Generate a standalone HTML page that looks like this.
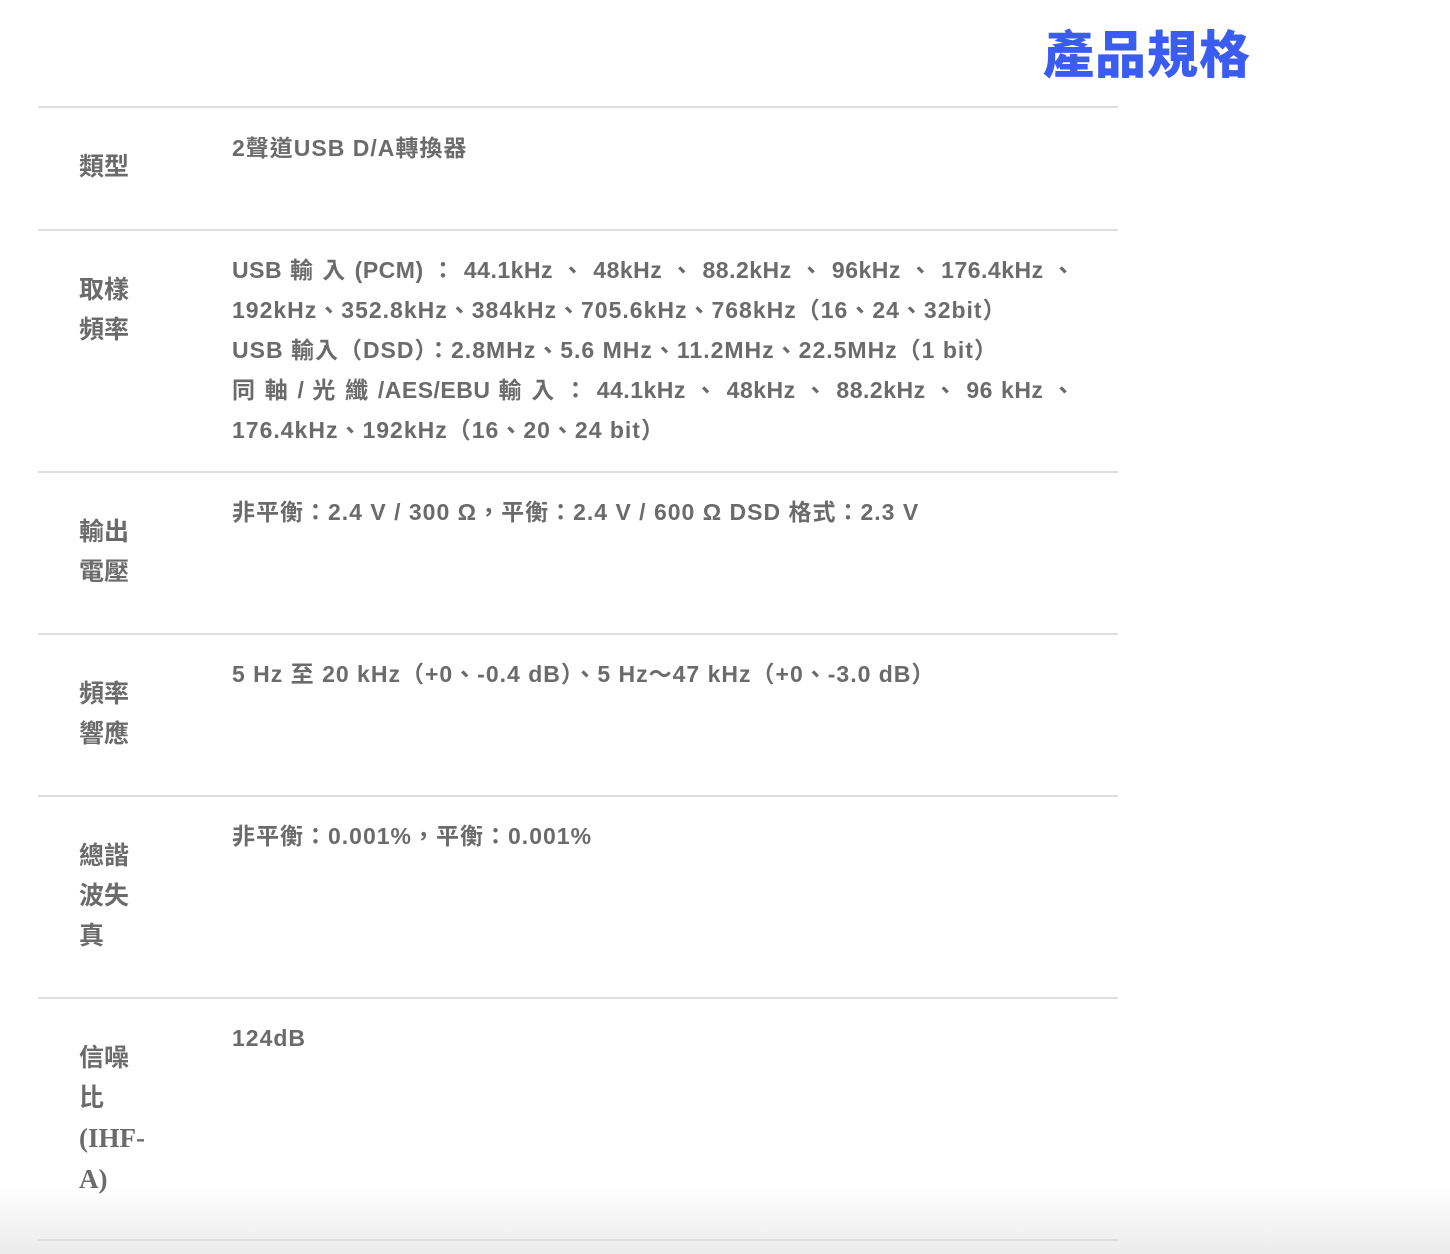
<!DOCTYPE html>
<html><head><meta charset="utf-8"><style>
body{margin:0;width:1450px;height:1254px;background:#fff;position:relative;overflow:hidden;font-family:"Liberation Sans","Noto Sans CJK TC",sans-serif;font-weight:bold;color:#6b6b6b}
.fade{position:absolute;left:0;top:1185px;width:1450px;height:69px;background:linear-gradient(#fff,#ececec)}
h1{position:absolute;left:1043px;top:18px;margin:0;font-size:51px;line-height:66px;color:#3b5cf0;font-family:"Noto Sans CJK TC",sans-serif;font-weight:900;letter-spacing:1px}
.hr{position:absolute;left:38px;width:1080px;height:2px;background:#dedede}
.l{position:absolute;left:79px;font-size:25px;line-height:40px;width:80px}
.c{position:absolute;left:232px;font-size:23px;line-height:40px;width:843px;white-space:nowrap;letter-spacing:1px}
.j{text-align:justify;text-align-last:justify;white-space:normal;letter-spacing:0.5px}
</style></head><body>
<div class="fade"></div>
<h1>產品規格</h1>
<div class="hr" style="top:106px"></div>
<div class="hr" style="top:229px"></div>
<div class="hr" style="top:471px"></div>
<div class="hr" style="top:633px"></div>
<div class="hr" style="top:795px"></div>
<div class="hr" style="top:997px"></div>
<div class="hr" style="top:1239px"></div>

<div class="l" style="top:147px">類型</div>
<div class="c" style="top:128px">2聲道USB D/A轉換器</div>

<div class="l" style="top:270px">取樣<br>頻率</div>
<div class="c" style="top:250px">
<div class="j">USB 輸 入 (PCM) ： 44.1kHz 、 48kHz 、 88.2kHz 、 96kHz 、 176.4kHz 、</div>
<div>192kHz、352.8kHz、384kHz、705.6kHz、768kHz（16、24、32bit）</div>
<div>USB 輸入（DSD）：2.8MHz、5.6 MHz、11.2MHz、22.5MHz（1 bit）</div>
<div class="j">同 軸 / 光 纖 /AES/EBU 輸 入 ： 44.1kHz 、 48kHz 、 88.2kHz 、 96 kHz 、</div>
<div>176.4kHz、192kHz（16、20、24 bit）</div>
</div>

<div class="l" style="top:512px">輸出<br>電壓</div>
<div class="c" style="top:492px">非平衡：2.4 V / 300 Ω，平衡：2.4 V / 600 Ω DSD 格式：2.3 V</div>

<div class="l" style="top:674px">頻率<br>響應</div>
<div class="c" style="top:654px">5 Hz 至 20 kHz（+0、-0.4 dB）、5 Hz～47 kHz（+0、-3.0 dB）</div>

<div class="l" style="top:836px">總諧<br>波失<br>真</div>
<div class="c" style="top:816px">非平衡：0.001%，平衡：0.001%</div>

<div class="l" style="top:1038px">信噪<br>比<br><span style="font-family:'Liberation Serif',serif;font-size:27px">(IHF-<br>A)</span></div>
<div class="c" style="top:1018px">124dB</div>
</body></html>
